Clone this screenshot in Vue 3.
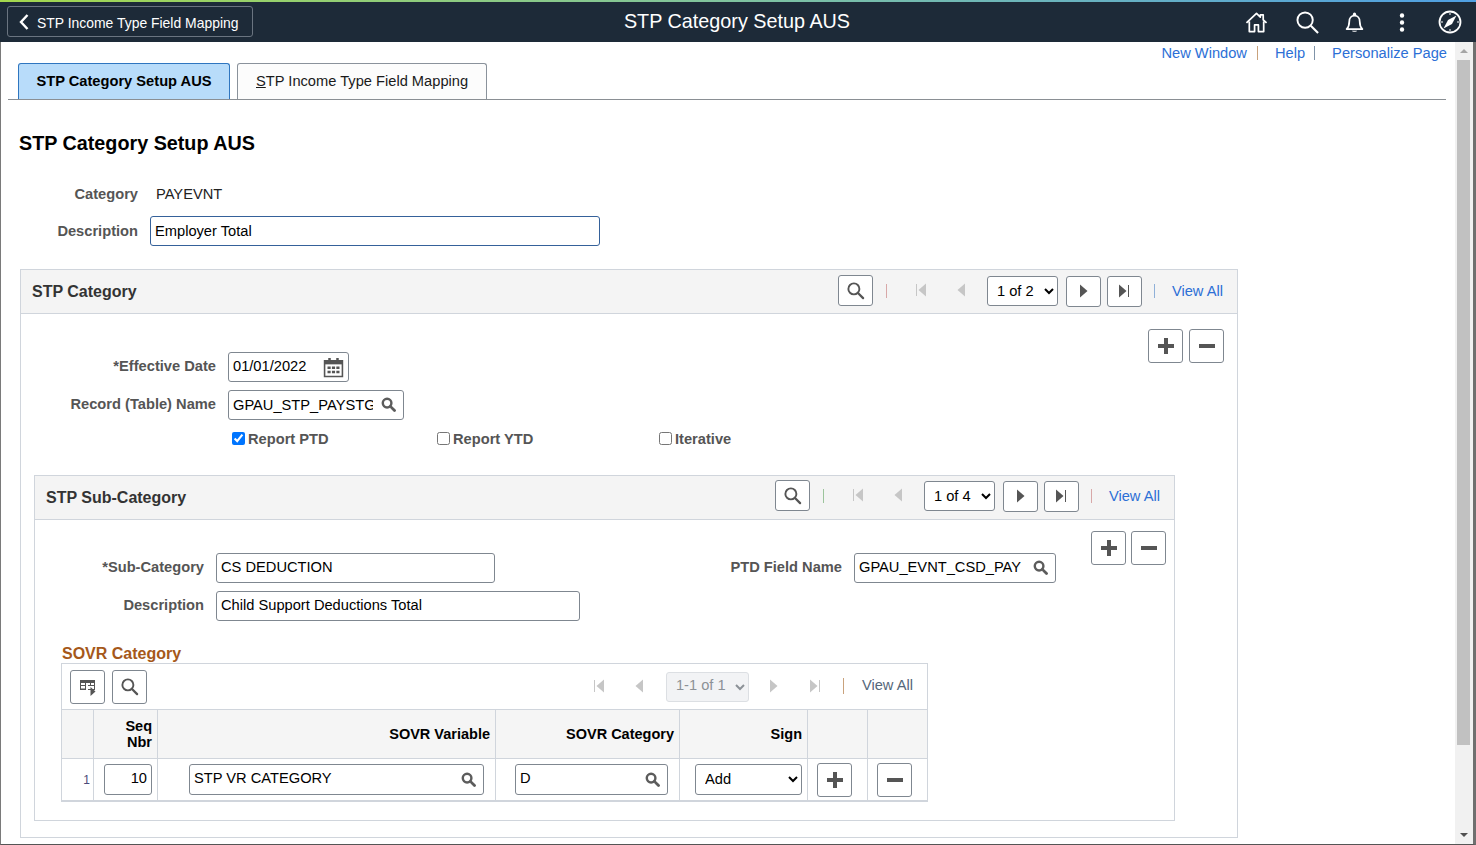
<script setup>
// Static recreation: every value on this page is fixed content.
</script>

<template>
  <div class="page">
    <svg class="sprite" aria-hidden="true">
      <defs>
        <symbol id="i-search" viewBox="0 0 20 20"><circle cx="8.3" cy="8.3" r="5.8" fill="none" stroke="currentColor" stroke-width="2"/><path d="M12.6 12.6 18 18" stroke="currentColor" stroke-width="2.4" stroke-linecap="round"/></symbol>
        <symbol id="i-lookup" viewBox="0 0 16 16"><circle cx="6.5" cy="6.5" r="4.6" fill="none" stroke="currentColor" stroke-width="2.6"/><path d="M10 10l4.4 4.4" stroke="currentColor" stroke-width="3" stroke-linecap="round"/></symbol>
        <symbol id="i-first" viewBox="0 0 12 14"><path d="M1 1h1v12H1z" fill="currentColor"/><path d="M11 .5v13L3.500 7z" fill="currentColor"/></symbol>
        <symbol id="i-prev" viewBox="0 0 12 14"><path d="M9 .5v13L1.500 7z" fill="currentColor"/></symbol>
        <symbol id="i-next" viewBox="0 0 12 14"><path d="M3 .5v13L10.500 7z" fill="currentColor"/></symbol>
        <symbol id="i-last" viewBox="0 0 12 14"><path d="M1 .5v13L8.500 7z" fill="currentColor"/><path d="M10 1h1v12h-1z" fill="currentColor"/></symbol>
        <symbol id="i-plus" viewBox="0 0 18 18"><path d="M7 1h4v6h6v4h-6v6H7v-6H1V7h6z" fill="currentColor"/></symbol>
        <symbol id="i-minus" viewBox="0 0 18 18"><path d="M1 7h16v4H1z" fill="currentColor"/></symbol>
      </defs>
    </svg>

    <header class="topbar">
      <button class="back" type="button">
        <svg class="back-icon" viewBox="0 0 10 16"><path d="M8.500 1 2 8l6.500 7" fill="none" stroke="#fff" stroke-width="2.400"/></svg>
        <span>STP Income Type Field Mapping</span>
      </button>
      <div class="top-title">STP Category Setup AUS</div>
      <div class="top-icons">
        <svg class="ti ti-home" viewBox="0 0 24 24"><path d="M1.500 12.500 12 2.500l4 3.800V4h3v5.200l3.500 3.300M4.500 11v10.500h5.500V14.500h4v7h5.500V11" fill="none" stroke="#fff" stroke-width="1.800" stroke-linejoin="round"/></svg>
        <svg class="ti ti-search" viewBox="0 0 24 24"><circle cx="9.500" cy="9.500" r="8" fill="none" stroke="#fff" stroke-width="2"/><path d="M15.500 15.500 23 23" stroke="#fff" stroke-width="2.200"/></svg>
        <svg class="ti ti-bell" viewBox="0 0 24 24"><path d="M3 19.500c2.500-2.500 3-5 3-8.500 0-4 2.500-6.800 6-6.800s6 2.800 6 6.800c0 3.500.5 6 3 8.500z" fill="none" stroke="#fff" stroke-width="2" stroke-linejoin="round"/><circle cx="12" cy="2.500" r="1.800" fill="#fff"/><path d="M9 21.500c.5 1.500 5.500 1.500 6 0z" fill="#fff"/></svg>
        <svg class="ti ti-dots" viewBox="0 0 6 24"><circle cx="3" cy="4" r="2.500" fill="#fff"/><circle cx="3" cy="12" r="2.500" fill="#fff"/><circle cx="3" cy="20" r="2.500" fill="#fff"/></svg>
        <svg class="ti ti-compass" viewBox="0 0 24 24"><circle cx="12" cy="12" r="10.500" fill="none" stroke="#fff" stroke-width="1.800"/><path d="M18.500 5.500 14 14l-8.500 4.500L10 10z" fill="#fff"/><path d="M12 3v2M12 19v2M3 12h2M19 12h2" stroke="#fff" stroke-width="1"/></svg>
      </div>
    </header>

    <div class="main">
      <div class="content">
        <nav class="links">
          <a class="link">New Window</a><i class="sep sep-link1"></i>
          <a class="link link-help">Help</a><i class="sep sep-link2"></i>
          <a class="link link-pers">Personalize Page</a>
        </nav>

        <div class="tabs">
          <div class="tab tab-active">STP Category Setup AUS</div>
          <div class="tab"><u>S</u>TP Income Type Field Mapping</div>
        </div>

        <h1 class="title">STP Category Setup AUS</h1>

        <div class="head-row head-row-cat">
          <span class="label head-label">Category</span>
          <span class="value">PAYEVNT</span>
        </div>
        <div class="head-row head-row-desc">
          <label class="label head-label">Description</label>
          <input class="input input-focus" value="Employer Total" />
        </div>

        <section class="box box-outer">
          <div class="box-head">
            <h2 class="box-title">STP Category</h2>
            <div class="pager pager-outer">
              <button class="btn" type="button"><svg class="ic-s"><use href="#i-search"/></svg></button>
              <i class="sep pager-sep sep-rose"></i>
              <span class="ghost ghost-first"><svg class="ic-nav"><use href="#i-first"/></svg></span>
              <span class="ghost ghost-prev"><svg class="ic-nav"><use href="#i-prev"/></svg></span>
              <select class="select pager-select"><option>1 of 2</option></select>
              <button class="btn btn-next" type="button"><svg class="ic-nav dark"><use href="#i-next"/></svg></button>
              <button class="btn btn-last" type="button"><svg class="ic-nav dark"><use href="#i-last"/></svg></button>
              <i class="sep pager-sep2 sep-blue"></i>
              <a class="link view-all">View All</a>
            </div>
          </div>

          <div class="box-top">
            <div class="form outer-form">
              <div class="row">
                <label class="label outer-label">*Effective Date</label>
                <div class="field date-field">
                  <input class="input-bare raised" value="01/01/2022" />
                  <svg class="cal" viewBox="0 0 20 20"><path d="M1.500 3.500h17v15h-17z" fill="none" stroke="#555" stroke-width="1.500"/><path d="M1.500 3h17v4h-17z" fill="#555"/><path d="M5 1h2.400v4H5zM12.600 1H15v4h-2.400z" fill="#555"/><path d="M4.300 9h3v2.400h-3zM8.500 9h3v2.400h-3zM12.700 9h3v2.400h-3zM4.300 13h3v2.400h-3zM8.500 13h3v2.400h-3zM12.700 13h3v2.400h-3z" fill="#555"/></svg>
                </div>
              </div>
              <div class="row">
                <label class="label outer-label">Record (Table) Name</label>
                <div class="field record-field">
                  <input class="input-bare" value="GPAU_STP_PAYSTG" />
                  <svg class="ic-l"><use href="#i-lookup"/></svg>
                </div>
              </div>
              <div class="checks">
                <label class="check check-1"><input type="checkbox" checked /><span>Report PTD</span></label>
                <label class="check check-2"><input type="checkbox" /><span>Report YTD</span></label>
                <label class="check"><input type="checkbox" /><span>Iterative</span></label>
              </div>
            </div>
            <div class="actions outer-actions">
              <button class="btn btn-act" type="button"><svg class="ic-act"><use href="#i-plus"/></svg></button>
              <button class="btn btn-act" type="button"><svg class="ic-act"><use href="#i-minus"/></svg></button>
            </div>
          </div>

          <section class="box box-sub">
            <div class="box-head">
              <h2 class="box-title">STP Sub-Category</h2>
              <div class="pager pager-sub">
                <button class="btn" type="button"><svg class="ic-s"><use href="#i-search"/></svg></button>
                <i class="sep pager-sep sep-green"></i>
                <span class="ghost ghost-first"><svg class="ic-nav"><use href="#i-first"/></svg></span>
                <span class="ghost ghost-prev"><svg class="ic-nav"><use href="#i-prev"/></svg></span>
                <select class="select pager-select"><option>1 of 4</option></select>
                <button class="btn btn-next" type="button"><svg class="ic-nav dark"><use href="#i-next"/></svg></button>
                <button class="btn btn-last" type="button"><svg class="ic-nav dark"><use href="#i-last"/></svg></button>
                <i class="sep pager-sep2 sep-rose"></i>
                <a class="link view-all">View All</a>
              </div>
            </div>

            <div class="box-top">
              <div class="form sub-form">
                <div class="row">
                  <label class="label sub-label">*Sub-Category</label>
                  <input class="input w-subcat raised" value="CS DEDUCTION" />
                  <label class="label ptd-label">PTD Field Name</label>
                  <div class="field ptd-field">
                    <input class="input-bare raised" value="GPAU_EVNT_CSD_PAY" />
                    <svg class="ic-l"><use href="#i-lookup"/></svg>
                  </div>
                </div>
                <div class="row">
                  <label class="label sub-label">Description</label>
                  <input class="input w-subdesc raised" value="Child Support Deductions Total" />
                </div>
              </div>
              <div class="actions sub-actions">
                <button class="btn btn-act" type="button"><svg class="ic-act"><use href="#i-plus"/></svg></button>
                <button class="btn btn-act" type="button"><svg class="ic-act"><use href="#i-minus"/></svg></button>
              </div>
            </div>

            <h3 class="grid-title">SOVR Category</h3>
            <div class="grid">
              <div class="grid-bar">
                <button class="btn" type="button">
                  <svg class="ic-table" viewBox="0 0 18 18"><path d="M1 2h15v10H9v-1h6V8H9V7h6V5H2v2h5v1H2v2.500h5V12H1z" fill="#555"/><path d="M6 5h1v7H6zM11 5h1v3h-1z" fill="#555"/><path d="M11.500 9v9l5-4.500z" fill="#555"/></svg>
                </button>
                <button class="btn btn-grid-search" type="button"><svg class="ic-s"><use href="#i-search"/></svg></button>
                <div class="grid-pager">
                  <span class="ghost"><svg class="ic-nav"><use href="#i-first"/></svg></span>
                  <span class="ghost ghost-gprev"><svg class="ic-nav"><use href="#i-prev"/></svg></span>
                  <select class="select grid-select" disabled><option>1-1 of 1</option></select>
                  <span class="ghost ghost-gnext"><svg class="ic-nav"><use href="#i-next"/></svg></span>
                  <span class="ghost ghost-glast"><svg class="ic-nav"><use href="#i-last"/></svg></span>
                  <i class="sep grid-sep"></i>
                  <a class="grid-view">View All</a>
                </div>
              </div>
              <table class="tbl">
                <colgroup>
                  <col class="c1" /><col class="c2" /><col class="c3" /><col class="c4" /><col class="c5" /><col class="c6" /><col class="c7" />
                </colgroup>
                <thead>
                  <tr>
                    <th></th>
                    <th>Seq<br />Nbr</th>
                    <th>SOVR Variable</th>
                    <th>SOVR Category</th>
                    <th>Sign</th>
                    <th></th>
                    <th class="last"></th>
                  </tr>
                </thead>
                <tbody>
                  <tr>
                    <td class="row-num">1</td>
                    <td class="td-seq"><input class="input seq-input" value="10" /></td>
                    <td class="td-var"><div class="field var-field"><input class="input-bare" value="STP VR CATEGORY" /><svg class="ic-l"><use href="#i-lookup"/></svg></div></td>
                    <td class="td-cat"><div class="field cat-field"><input class="input-bare" value="D" /><svg class="ic-l"><use href="#i-lookup"/></svg></div></td>
                    <td class="td-sign"><select class="select sign-select"><option>Add</option></select></td>
                    <td class="td-btn"><button class="btn btn-act" type="button"><svg class="ic-act"><use href="#i-plus"/></svg></button></td>
                    <td class="td-btn last"><button class="btn btn-act" type="button"><svg class="ic-act"><use href="#i-minus"/></svg></button></td>
                  </tr>
                </tbody>
              </table>
            </div>
          </section>
        </section>
      </div>

      <aside class="scrollbar">
        <span class="arrow arrow-up"></span>
        <span class="thumb"></span>
        <span class="arrow arrow-down"></span>
      </aside>
    </div>
  </div>
</template>

<style>
html, body { margin: 0; padding: 0; overflow: hidden; background: #fff; }
</style>

<style scoped>
* { box-sizing: border-box; }
.page {
  width: 1476px; height: 845px; display: flex; flex-direction: column; overflow: hidden;
  font-family: "Liberation Sans", Arial, sans-serif; font-size: 14.67px; color: #000; background: #fff;
}
.sprite { width: 0; height: 0; display: block; overflow: hidden; }
.topbar {
  height: 42px; flex: none; display: flex; align-items: center; padding: 2px 0 0 7px; position: relative;
  background: linear-gradient(#1d2a38, #1d2a38) 0 2px / 100% 40px no-repeat,
    linear-gradient(90deg, #a4d84e 0%, #7fc3a0 50%, #4f9fe3 100%) 0 0 / 100% 2px no-repeat;
}
.back {
  width: 246px; height: 31px; margin-top: -1px; display: flex; align-items: center; gap: 8px; padding: 2px 0 0 11px;
  background: transparent; border: 1px solid #6a7480; border-radius: 3px; color: #fff;
  font: 13.93px "Liberation Sans", Arial, sans-serif;
}
.back-icon { width: 10px; height: 16px; flex: none; margin-top: -2px; }
.top-title {
  position: absolute; left: 0; right: 2px; top: 2px; height: 38px; line-height: 38px; text-align: center;
  color: #fff; font-size: 19.8px;
}
.top-icons { margin-left: auto; display: flex; align-items: center; height: 100%; padding-right: 14px; }
.ti { display: block; flex: none; }
.ti-home { width: 23px; height: 23px; }
.ti-search { width: 23px; height: 23px; margin-left: 28px; }
.ti-bell { width: 21px; height: 23px; margin-left: 25px; }
.ti-dots { width: 6px; height: 21px; margin-left: 34px; }
.ti-compass { width: 24px; height: 24px; margin-left: 33px; }

.main {
  flex: 1; min-height: 0; display: flex; border-left: 1px solid #7a7a7a; border-right: 3px solid #6f6f6f; border-bottom: 1px solid #555;
}
.content { flex: 1; min-width: 0; overflow: hidden; }
.links { height: 21px; display: flex; align-items: center; justify-content: flex-end; padding-right: 8px; }
.link { color: #2c6fd6; white-space: nowrap; }
.sep { display: block; width: 1px; height: 14px; flex: none; }
.sep-link1 { background: #c9a27c; margin-left: 10px; }
.link-help { margin-left: 17px; }
.sep-link2 { background: #7f93a8; margin-left: 9px; }
.link-pers { margin-left: 17px; }

.tabs {
  height: 37px; margin: 0 9px 0 7px; padding-left: 10px; display: flex; gap: 7px; border-bottom: 1px solid #8a8f94;
}
.tab {
  height: 36px; padding: 0 18px; line-height: 35px; border: 1px solid #8a929b; border-bottom: 0; border-radius: 3px 3px 0 0;
  background: #fcfcfc; white-space: nowrap; color: #1a1a1a;
}
.tab-active { width: 212px; padding: 0; text-align: center; background: #b8dcfa; border-color: #2f76c0; font-weight: 700; color: #000; }
.tab:not(.tab-active) { width: 250px; }

.title { margin: 30px 0 0 18px; height: 26px; line-height: 26px; font-size: 19.75px; font-weight: 700; }
.head-row { display: flex; align-items: center; height: 18px; }
.head-row-cat { margin-top: 29px; }
.head-row-desc { height: 30px; margin-top: 13px; }
.label { font-weight: 700; color: #555; text-align: right; white-space: nowrap; flex: none; }
.head-label { width: 137px; }
.value { margin-left: 18px; color: #222; }
.input-focus { margin-left: 12px; width: 450px; border-color: #35619a !important; }

.input, .input-bare {
  font: 14.67px "Liberation Sans", Arial, sans-serif; color: #000;
}
.input { height: 30px; padding: 0 4px; background: #fff; border: 1px solid #7f8790; border-radius: 3px; outline: none; flex: none; }
.input-bare { flex: 1; min-width: 0; height: 100%; padding: 0 0 0 4px; border: 0; background: transparent; outline: none; }
.raised { padding-bottom: 2px; }
.field {
  height: 30px; display: flex; align-items: center; background: #fff; border: 1px solid #7f8790; border-radius: 3px; flex: none;
}

.box { border: 1px solid #d0d5dc; background: #fff; }
.box-outer { width: 1218px; height: 569px; margin: 23px 0 0 19px; }
.box-head {
  height: 44px; display: flex; align-items: center; justify-content: space-between; padding: 0 14px 0 11px;
  background: #f4f4f4; border-bottom: 1px solid #d0d5dc;
}
.box-title { margin: 0; font-size: 16px; font-weight: 700; color: #333; }

.pager { display: flex; align-items: center; }
.pager-outer { margin-bottom: 2px; }
.pager-sub { margin-bottom: 4px; }
.btn {
  width: 35px; height: 31px; padding: 0; display: flex; align-items: center; justify-content: center; flex: none;
  background: #fff; border: 1px solid #7f8790; border-radius: 3px; color: #555;
}
.ic-s { width: 19px; height: 19px; color: #555; display: block; }
.ic-l { width: 15px; height: 15px; color: #5c5c5c; flex: none; margin: 0 7px 1px 0; display: block; }
.ic-nav { width: 12px; height: 14px; color: #c6c6c6; display: block; margin-bottom: 2px; }
.ic-nav.dark { color: #555; }
.ghost { width: 35px; height: 31px; display: flex; align-items: center; justify-content: center; flex: none; }
.pager-sep { margin-left: 13px; }
.sep-rose { background: #d8a8a8; }
.sep-blue { background: #8fb0d8; }
.sep-green { background: #9cc49c; }
.ghost-first { margin-left: 17px; }
.ghost-prev { margin-left: 6px; }
.select {
  font: 14.67px "Liberation Sans", Arial, sans-serif; color: #000; background: #fff; height: 30px;
  border: 1px solid #7f8790; border-radius: 3px; padding: 0 0 0 5px; flex: none;
}
.pager-select { width: 71px; margin-left: 7px; }
.btn-next { margin: 2px 0 0 8px; }
.btn-last { margin: 2px 0 0 6px; }
.pager-sep2 { margin-left: 12px; }
.view-all { margin-left: 17px; }

.box-top { display: flex; justify-content: space-between; align-items: flex-start; }
.form { display: flex; flex-direction: column; gap: 8px; }
.outer-form { padding-top: 38px; }
.row { display: flex; align-items: center; height: 30px; }
.row > .label { margin-bottom: 2px; }
.outer-label { width: 195px; margin-right: 12px; }
.date-field { width: 121px; }
.cal { width: 21px; height: 21px; flex: none; margin-right: 4px; }
.record-field { width: 176px; }
.record-field .input-bare { margin-right: 8px; }
.checks { display: flex; align-items: center; height: 15px; margin: 3px 0 29px 211px; }
.check { display: flex; align-items: center; gap: 3px; font-weight: 700; color: #555; flex: none; }
.check input { margin: 0; width: 13px; height: 13px; }
.check-1 { width: 205px; }
.check-2 { width: 222px; }
.actions { display: flex; gap: 6px; }
.btn-act { height: 34px; }
.ic-act { width: 18px; height: 18px; color: #555; display: block; }
.outer-actions { padding: 15px 13px 0 0; }

.box-sub { width: 1141px; height: 346px; margin-left: 13px; }
.sub-form { padding-top: 33px; }
.sub-label { width: 169px; margin-right: 12px; }
.w-subcat { width: 279px; }
.ptd-label { width: 347px; margin-right: 12px; }
.ptd-field { width: 202px; }
.ptd-field .input-bare { margin-right: 4px; }
.w-subdesc { width: 364px; }
.sub-actions { padding: 11px 8px 0 0; gap: 5px; }

.grid-title { margin: 24px 0 0 27px; height: 18px; line-height: 18px; font-size: 16px; font-weight: 700; color: #a5581a; }
.grid { width: 867px; margin-left: 26px; border: 1px solid #d0d5dc; border-bottom-width: 2px; }
.grid-bar { height: 46px; display: flex; align-items: center; padding: 0 14px 0 8px; border-bottom: 1px solid #d0d5dc; }
.grid-bar .btn { height: 34px; }
.btn-grid-search { margin-left: 7px; }
.ic-table { width: 18px; height: 18px; display: block; }
.grid-pager { margin-left: auto; display: flex; align-items: center; }
.ghost-gprev { margin-left: 6px; }
.grid-select {
  width: 83px; margin-left: 8px; opacity: 1; background: #f2f3f5; border-color: #dcdfe3; color: #8c9197; padding: 0 0 3px 5px;
}
.ghost-gnext { margin-left: 7px; }
.ghost-glast { margin-left: 7px; }
.grid-sep { background: #c9a27c; height: 16px; margin: 0 0 2px 10px; }
.grid-view { margin: 0 0 3px 18px; color: #55677a; }

.tbl { table-layout: fixed; border-collapse: separate; border-spacing: 0; width: 865px; }
.c1 { width: 32px; } .c2 { width: 64px; } .c3 { width: 338px; } .c4 { width: 184px; } .c5 { width: 128px; } .c6 { width: 60px; } .c7 { width: 59px; }
.tbl th {
  height: 49px; padding: 0 5px 0 0; text-align: right; vertical-align: middle; font-size: 14.5px; line-height: 16px; font-weight: 700; color: #000;
  background: #f5f5f5; border-right: 1px solid #d0d5dc; border-bottom: 1px solid #d0d5dc;
}
.tbl td { height: 41px; padding: 0; vertical-align: middle; border-right: 1px solid #d0d5dc; }
.tbl .last { border-right: 0; }
.row-num { text-align: right; font-size: 12px; color: #4a4a7a; padding-right: 3px !important; }
.td-seq { padding-left: 10px !important; }
.seq-input { width: 48px; height: 31px; text-align: right; padding-bottom: 3px; }
.td-var { padding-left: 31px !important; }
.var-field { width: 295px; height: 31px; }
.var-field .input-bare, .cat-field .input-bare { padding-bottom: 3px; }
.td-cat { padding-left: 19px !important; }
.cat-field { width: 153px; height: 31px; }
.td-sign { padding-left: 15px !important; }
.sign-select { width: 107px; height: 31px; padding: 0 0 2px 5px; }
.td-btn { padding-left: 9px !important; }

.scrollbar { width: 18px; flex: none; display: flex; flex-direction: column; align-items: center; background: #f1f1f1; }
.arrow { display: block; width: 0; height: 0; border-left: 4px solid transparent; border-right: 4px solid transparent; flex: none; }
.arrow-up { border-bottom: 4px solid #a5a5a5; margin: 7px 0; }
.thumb { width: 13px; height: 685px; flex: none; background: #c1c1c1; align-self: flex-start; margin-left: 2px; }
.arrow-down { border-top: 4px solid #505050; margin-top: auto; margin-bottom: 7px; }
</style>
